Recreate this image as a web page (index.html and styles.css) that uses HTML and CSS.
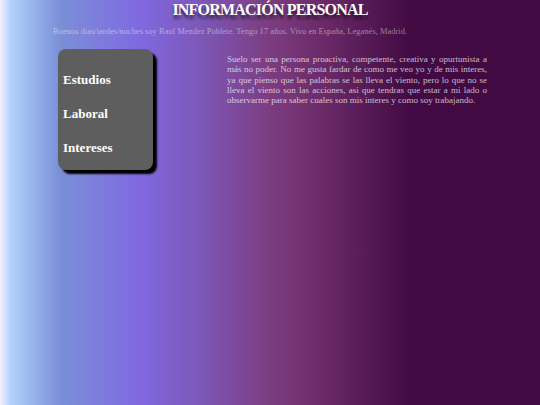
FILE: index.html
```html
<!DOCTYPE html>
<html lang="es">
<head>
<meta charset="utf-8">
<title>Información personal</title>
<link rel="stylesheet" href="styles.css">
</head>
<body>
<header class="header">
  <h1 class="title">INFORMACIÓN PERSONAL</h1>
  <p class="intro">Buenos dias/tardes/noches soy Raul Mendez Poblete. Tengo 17 años. Vivo en España, Leganés, Madrid.</p>
</header>
<main class="content">
  <nav class="menu">
    <a class="menu-item" href="#">Estudios</a>
    <a class="menu-item" href="#">Laboral</a>
    <a class="menu-item" href="#">Intereses</a>
  </nav>
  <p class="about">Suelo ser una persona proactiva, competente, creativa y opurtunista a más no poder. No me gusta fardar de como me veo yo y de mis interes, ya que pienso que las palabras se las lleva el viento, pero lo que no se lleva el viento son las acciones, asi que tendras que estar a mi lado o observarme para saber cuales son mis interes y como soy trabajando.</p>
</main>
</body>
</html>
```
FILE: styles.css
```css
html, body {
  margin: 0;
  padding: 0;
  height: 100%;
}
body {
  font-family: "Liberation Serif", "Times New Roman", serif;
  background: linear-gradient(to right,
    #f6eefe 0%,
    #b2d2fa 2%,
    #98b4ec 6%,
    #7a90d8 11%,
    #8068e0 26%,
    #7c58b8 37%,
    #7c3c80 50%,
    #6a2a68 60%,
    #420a42 76%,
    #420a42 100%);
  min-height: 405px;
}
.header {
  text-align: center;
}
.title {
  margin: 0;
  font-size: 16px;
  line-height: 19px;
  font-weight: bold;
  letter-spacing: -0.8px;
  color: #ffffff;
  text-shadow: 0 4px 3px rgba(0, 0, 0, 0.55);
}
.intro {
  margin: 7px 0 0 53px;
  text-align: left;
  font-size: 8.5px;
  line-height: 11px;
  color: rgba(255, 255, 255, 0.45);
}
.content {
  display: flex;
  align-items: flex-start;
  padding: 12px 0 0 58px;
}
.menu {
  width: 95px;
  height: 121px;
  box-sizing: border-box;
  background: #5e5e5e;
  border-radius: 8px;
  box-shadow: 4px 4px 2px #000;
  display: flex;
  flex-direction: column;
  padding: 23px 0 0 5px;
  gap: 19px;
}
.menu-item {
  color: #ffffff;
  font-weight: bold;
  font-size: 13px;
  line-height: 15px;
  text-decoration: none;
}
.about {
  margin: 5px 0 0 74px;
  width: 260px;
  text-align: justify;
  font-size: 9px;
  line-height: 10.3px;
  color: rgba(255, 255, 255, 0.72);
}
```
